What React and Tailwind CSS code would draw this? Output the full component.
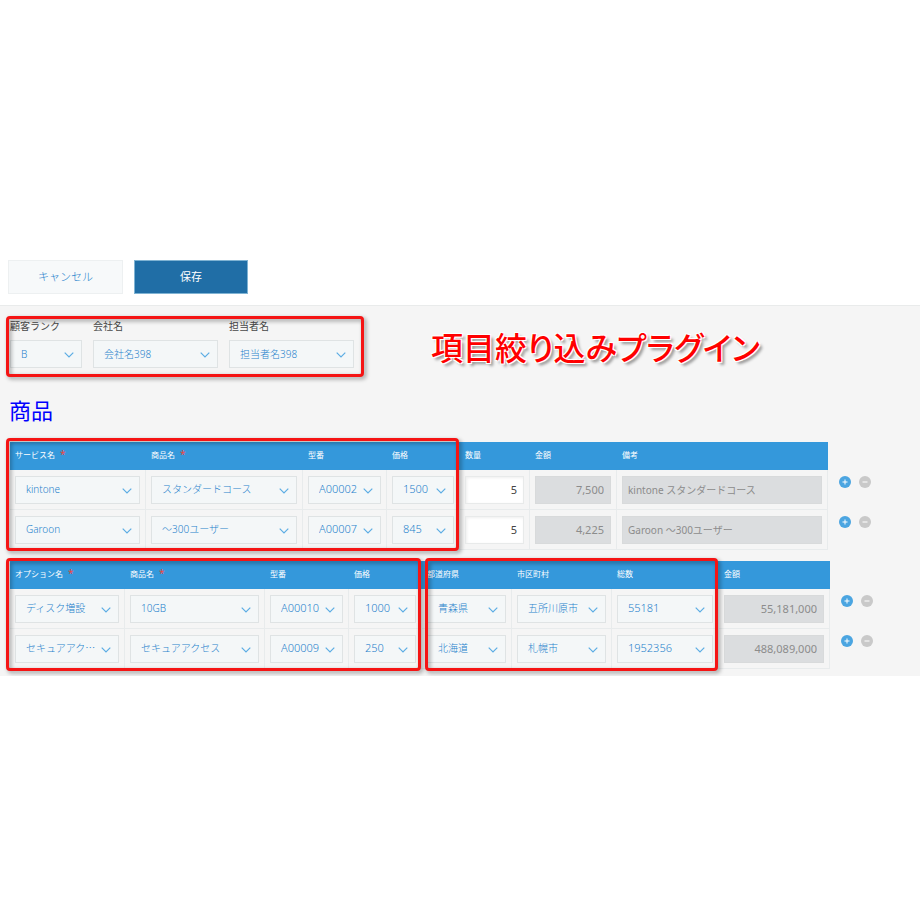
import React, { useState } from "react";

// required: shows the red mark, type: how the cell is edited
const serviceColumns = [
  { key: "service", label: "サービス名", required: true, type: "select", width: "w-[136px]" },
  { key: "product", label: "商品名", required: true, type: "select", width: "w-[157px]" },
  { key: "model", label: "型番", type: "select", numeric: true, width: "w-[84px]" },
  { key: "price", label: "価格", type: "select", numeric: true, width: "w-[73px]" },
  { key: "quantity", label: "数量", type: "input", width: "w-[70px]" },
  { key: "amount", label: "金額", type: "readonly", numeric: true, width: "w-[87px]" },
  { key: "note", label: "備考", type: "readonly", width: "w-[211px]" },
];

const serviceRows = [
  {
    service: "kintone",
    product: "スタンダードコース",
    model: "A00002",
    price: "1500",
    quantity: "5",
    amount: "7,500",
    note: "kintone スタンダードコース",
  },
  {
    service: "Garoon",
    product: "～300ユーザー",
    model: "A00007",
    price: "845",
    quantity: "5",
    amount: "4,225",
    note: "Garoon ～300ユーザー",
  },
];

const optionColumns = [
  { key: "option", label: "オプション名", required: true, type: "select", width: "w-[115px]" },
  { key: "product", label: "商品名", required: true, type: "select", width: "w-[140px]" },
  { key: "model", label: "型番", type: "select", numeric: true, width: "w-[84px]" },
  { key: "price", label: "価格", type: "select", numeric: true, width: "w-[73px]" },
  { key: "prefecture", label: "都道府県", type: "select", width: "w-[90px]" },
  { key: "city", label: "市区町村", type: "select", width: "w-[100px]" },
  { key: "total", label: "総数", type: "select", numeric: true, width: "w-[107px]" },
  { key: "amount", label: "金額", type: "readonly", numeric: true, width: "w-[111px]" },
];

const optionRows = [
  {
    option: "ディスク増設",
    product: "10GB",
    model: "A00010",
    price: "1000",
    prefecture: "青森県",
    city: "五所川原市",
    total: "55181",
    amount: "55,181,000",
  },
  {
    option: "セキュアアク⋯",
    product: "セキュアアクセス",
    model: "A00009",
    price: "250",
    prefecture: "北海道",
    city: "札幌市",
    total: "1952356",
    amount: "488,089,000",
  },
];

function Select({ value, numeric, ...props }) {
  return (
    <div className="relative">
      <select
        defaultValue={value}
        className={`block h-7 w-full appearance-none border border-[#dfe3e4] bg-[#f4f7f8] pl-[10px] pr-4 font-light text-[#1f82cc] outline-none ${
          numeric ? "text-[11px]" : "text-[10px]"
        }`}
        {...props}
      >
        <option value={value}>{value}</option>
      </select>
      <svg
        viewBox="0 0 10 6"
        className="pointer-events-none absolute right-2 top-3 h-[6px] w-[10px]"
        fill="none"
        stroke="#5cade4"
        strokeWidth="1.2"
      >
        <path d="M0.7 0.7 L5 5 L9.3 0.7" />
      </svg>
    </div>
  );
}

function Field({ id, label, value, width }) {
  return (
    <div className={width}>
      <label htmlFor={id} className="mb-2 block text-[10px] leading-3 text-[#484848]">
        {label}
      </label>
      <Select id={id} value={value} />
    </div>
  );
}

function Cell({ column, value }) {
  if (column.type === "select") {
    return <Select value={value} numeric={column.numeric} aria-label={column.label} />;
  }

  if (column.type === "input") {
    return (
      <input
        type="text"
        defaultValue={value}
        aria-label={column.label}
        className="block h-7 w-full border border-[#e8eaea] bg-white px-[6px] text-right text-[11px] text-[#444444] shadow-[inset_1px_1px_3px_#eeeeee] outline-none"
      />
    );
  }

  return (
    <input
      type="text"
      readOnly
      value={value}
      aria-label={column.label}
      className={`block h-7 w-full border border-[#d8dadb] bg-[#dbdddf] text-[#8c8c8c] outline-none ${
        column.numeric ? "px-[6px] text-right text-[11px]" : "px-[5px] text-[10px]"
      }`}
    />
  );
}

function RowButton({ label, minus, onClick }) {
  return (
    <button
      type="button"
      aria-label={label}
      onClick={onClick}
      className={`h-3 w-3 rounded-full ${minus ? "bg-[#c9c9c9]" : "bg-[#4ba5e1]"}`}
    >
      <svg viewBox="0 0 12 12" className="h-3 w-3" stroke="#ffffff">
        <path d={minus ? "M3.5 6 H8.5" : "M3.5 6 H8.5 M6 3.5 V8.5"} />
      </svg>
    </button>
  );
}

function SubTable({ columns, initialRows, width, children }) {
  const [rows, setRows] = useState(initialRows);

  function addRow(index) {
    setRows([...rows.slice(0, index + 1), { ...rows[index] }, ...rows.slice(index + 1)]);
  }

  function removeRow(index) {
    if (rows.length > 1) setRows(rows.filter((_, i) => i !== index));
  }

  return (
    <div className="relative">
      <table className={`table-fixed border-separate border-spacing-0 ${width}`}>
        <colgroup>
          {columns.map((column) => (
            <col key={column.key} className={column.width} />
          ))}
          <col className="w-[50px]" />
        </colgroup>
        <thead>
          <tr className="h-7">
            {columns.map((column) => (
              <th
                key={column.key}
                className="bg-[#3498db] px-[5px] pb-[3px] text-left text-[8px] font-normal leading-3 text-white"
              >
                {column.label}
                {column.required && (
                  <span className="ml-[5px] text-[10px] leading-none text-[#f0463c]">*</span>
                )}
              </th>
            ))}
            <td />
          </tr>
        </thead>
        <tbody>
          {rows.map((row, index) => (
            <tr key={index} className="h-10">
              {columns.map((column) => (
                <td key={column.key} className="border-b border-r border-[#e8ebec] px-[5px]">
                  <Cell column={column} value={row[column.key]} />
                </td>
              ))}
              <td className="pl-[11px] pt-[6px] align-top">
                <div className="flex gap-2">
                  <RowButton label="行を追加する" onClick={() => addRow(index)} />
                  <RowButton label="行を削除する" minus onClick={() => removeRow(index)} />
                </div>
              </td>
            </tr>
          ))}
        </tbody>
      </table>
      {children}
    </div>
  );
}

// red frame drawn over a group of fields or columns
function Frame({ className }) {
  return (
    <div
      className={`pointer-events-none absolute rounded border-[3px] border-[#f51414] drop-shadow-[2px_2px_2px_rgba(0,0,0,0.4)] ${className}`}
    />
  );
}

export default function App() {
  return (
    <div className="bg-white pt-[260px] font-['Noto_Sans','Noto_Sans_CJK_JP',sans-serif]">
      <header className="flex gap-[11px] pb-[11px] pl-2">
        <button
          type="button"
          className="h-[34px] w-[115px] border border-[#edf0f1] bg-[#f7f9fa] text-[11px] font-light text-[#1f82cc]"
        >
          キャンセル
        </button>
        <button
          type="button"
          className="h-[34px] w-[114px] border border-[#7fb3d3] bg-[#206ea6] text-[11px] text-white"
        >
          保存
        </button>
      </header>

      <main className="border-t border-[#e9ebeb] bg-[#f5f5f5] pb-[7px] pt-[10px]">
        <div className="flex items-start gap-[67px] pl-[6px]">
          <div className="relative flex gap-[11px] pb-[9px] pl-1 pr-[10px] pt-1">
            <Field id="rank" label="顧客ランク" value="B" width="w-[72px]" />
            <Field id="company" label="会社名" value="会社名398" width="w-[125px]" />
            <Field id="person" label="担当者名" value="担当者名398" width="w-[125px]" />
            <Frame className="inset-0" />
          </div>
          <p className="pt-2 font-['Noto_Sans_CJK_JP',sans-serif] text-[32px] font-medium leading-[44px] text-[#ff0000] [font-feature-settings:'palt'] [text-shadow:-1px_-1px_0_#fff,1px_-1px_0_#fff,-1px_1px_0_#fff,1px_1px_0_#fff,3px_3px_3px_rgba(0,0,0,0.4)]">
            項目絞り込みプラグイン
          </p>
        </div>

        <h2 className="mb-5 mt-[21px] pl-[9px] text-[22px] leading-6 text-[#0000ff]">商品</h2>

        <div className="flex flex-col gap-[11px] pl-[10px]">
          <SubTable columns={serviceColumns} initialRows={serviceRows} width="w-[868px]">
            <Frame className="-bottom-px -left-1 -top-1 w-[453px]" />
          </SubTable>
          <SubTable columns={optionColumns} initialRows={optionRows} width="w-[870px]">
            <Frame className="-bottom-[2px] -left-1 -top-[3px] w-[415px]" />
            <Frame className="-bottom-[2px] -top-[3px] left-[415px] w-[293px]" />
          </SubTable>
        </div>
      </main>
    </div>
  );
}
